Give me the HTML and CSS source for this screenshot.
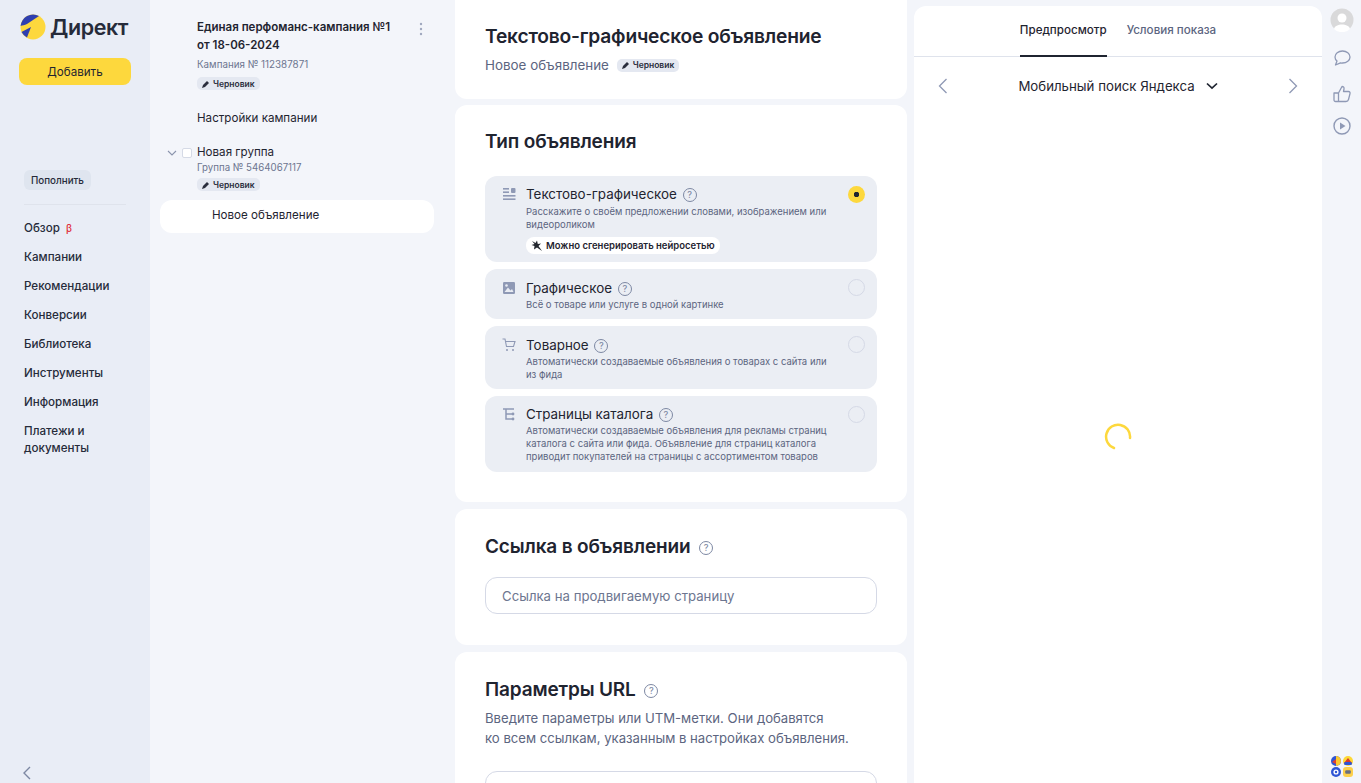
FILE: index.html
```html
<!DOCTYPE html>
<html lang="ru">
<head>
    <meta charset="UTF-8">
    <title>Директ</title>
    <link rel="stylesheet" href="styles.css">
</head>
<body>
    <aside class="sidebar">
        <div class="logo">
            <svg class="logo-mark" width="26" height="26" viewBox="0 0 26 26">
                <circle cx="13" cy="13" r="12.5" fill="#fdd83d"/>
                <path d="M0.6 12 A12.5 12.5 0 0 1 19 2 L7 10 C4.5 11 2.5 11.5 0.6 12 Z" fill="#2f3fb0"/>
                <path d="M1.5 18 L11 13 L7 23.5 A12.5 12.5 0 0 1 1.5 18 Z" fill="#2f3fb0"/>
            </svg>
            <span class="logo-text">Директ</span>
        </div>
        <button class="add-btn">Добавить</button>
        <button class="topup-btn">Пополнить</button>
        <div class="side-line"></div>
        <nav class="side-nav">
            <a>Обзор <span class="beta">β</span></a>
            <a>Кампании</a>
            <a>Рекомендации</a>
            <a>Конверсии</a>
            <a>Библиотека</a>
            <a>Инструменты</a>
            <a>Информация</a>
            <a>Платежи и<br>документы</a>
        </nav>
        <svg class="collapse" width="10" height="14" viewBox="0 0 10 14"><path d="M8 1 L2 7 L8 13" fill="none" stroke="#7d88a3" stroke-width="1.4"/></svg>
    </aside>

    <section class="tree">
        <div class="tree-head">
            <div class="tree-title">Единая перфоманс-кампания №1 от 18-06-2024</div>
            <svg class="dots" width="4" height="14" viewBox="0 0 4 14"><circle cx="2" cy="2" r="1.2" fill="#a0a8bf"/><circle cx="2" cy="7" r="1.2" fill="#a0a8bf"/><circle cx="2" cy="12" r="1.2" fill="#a0a8bf"/></svg>
        </div>
        <div class="tree-sub">Кампания № 112387871</div>
        <span class="draft"><svg width="8" height="8" viewBox="0 0 8 8"><path d="M0 8 L1 5 L5 1 L7 3 L3 7 Z" fill="#2a2e3d"/></svg>Черновик</span>
        <div class="tree-link">Настройки кампании</div>
        <div class="group-row">
            <svg width="10" height="6" viewBox="0 0 10 6"><path d="M1 1 L5 5 L9 1" fill="none" stroke="#8b94ad" stroke-width="1.1"/></svg>
            <span class="check"></span>
            <span>Новая группа</span>
        </div>
        <div class="tree-sub group-sub">Группа № 5464067117</div>
        <span class="draft"><svg width="8" height="8" viewBox="0 0 8 8"><path d="M0 8 L1 5 L5 1 L7 3 L3 7 Z" fill="#2a2e3d"/></svg>Черновик</span>
        <div class="tree-active">Новое объявление</div>
    </section>

    <main class="main">
        <div class="card card-head">
            <h1>Текстово-графическое объявление</h1>
            <div class="head-sub">Новое объявление <span class="draft draft-inline"><svg width="8" height="8" viewBox="0 0 8 8"><path d="M0 8 L1 5 L5 1 L7 3 L3 7 Z" fill="#2a2e3d"/></svg>Черновик</span></div>
        </div>

        <div class="card card-type">
            <h2>Тип объявления</h2>
            <div class="types">
                <div class="type type-first">
                    <svg class="type-icon" width="14" height="14" viewBox="0 0 14 14"><g fill="#8f99b5"><rect x="1" y="1" width="6" height="1.6"/><rect x="1" y="4.4" width="6" height="1.6"/><rect x="9" y="1" width="4.5" height="5" rx="1"/><rect x="1" y="8" width="12.5" height="1.6"/><rect x="1" y="11.4" width="12.5" height="1.6"/></g></svg>
                    <div class="type-body">
                        <div class="type-title">Текстово-графическое <span class="help">?</span></div>
                        <p>Расскажите о своём предложении словами, изображением или видеороликом</p>
                        <span class="neuro"><svg width="12" height="12" viewBox="0 0 12 12"><path d="M1 1 L4.5 3 L6 0.5 L6.8 4 L10 3.5 L7.5 6 L11 11 L6 7.5 L3 9.5 L3.5 6 L0.5 5 L3.5 4 Z" fill="#23272f"/></svg>Можно сгенерировать нейросетью</span>
                    </div>
                    <span class="radio radio-on"></span>
                </div>
                <div class="type type-second">
                    <svg class="type-icon" width="14" height="14" viewBox="0 0 14 14"><rect x="1" y="1" width="12" height="12" rx="1.2" fill="#8f99b5"/><circle cx="4.5" cy="4.5" r="1.3" fill="#e9ecf3"/><path d="M2.5 11 L6 6.5 L8.5 9.5 L10 8 L11.5 11 Z" fill="#e9ecf3"/></svg>
                    <div class="type-body">
                        <div class="type-title">Графическое <span class="help">?</span></div>
                        <p>Всё о товаре или услуге в одной картинке</p>
                    </div>
                    <span class="radio"></span>
                </div>
                <div class="type type-third">
                    <svg class="type-icon" width="14" height="14" viewBox="0 0 14 14"><path d="M0.5 1 H3 L4.5 8.5 H11.5 L13 3.5 H3.6" fill="none" stroke="#8f99b5" stroke-width="1.1"/><circle cx="5" cy="12" r="1" fill="#8f99b5"/><circle cx="11" cy="12" r="1" fill="#8f99b5"/></svg>
                    <div class="type-body">
                        <div class="type-title">Товарное <span class="help">?</span></div>
                        <p>Автоматически создаваемые объявления о товарах с сайта или из фида</p>
                    </div>
                    <span class="radio"></span>
                </div>
                <div class="type type-fourth">
                    <svg class="type-icon" width="14" height="14" viewBox="0 0 14 14"><path d="M1 2 H12 M4 2 V12 H10 M4 7 H10" fill="none" stroke="#8f99b5" stroke-width="1.5"/><circle cx="11" cy="7" r="1.4" fill="#8f99b5"/><circle cx="11" cy="12" r="1.4" fill="#8f99b5"/></svg>
                    <div class="type-body">
                        <div class="type-title">Страницы каталога <span class="help">?</span></div>
                        <p>Автоматически создаваемые объявления для рекламы страниц каталога с сайта или фида. Объявление для страниц каталога приводит покупателей на страницы с ассортиментом товаров</p>
                    </div>
                    <span class="radio"></span>
                </div>
            </div>
        </div>

        <div class="card card-link">
            <h2>Ссылка в объявлении <span class="help help-big">?</span></h2>
            <div class="field">Ссылка на продвигаемую страницу</div>
        </div>

        <div class="card card-params">
            <h2>Параметры URL <span class="help help-big">?</span></h2>
            <p class="params-text">Введите параметры или UTM-метки. Они добавятся<br>ко всем ссылкам, указанным в настройках объявления.</p>
            <div class="field"></div>
        </div>
    </main>

    <section class="preview">
        <div class="tabs">
            <span class="tab tab-on">Предпросмотр</span>
            <span class="tab">Условия показа</span>
        </div>
        <div class="device-row">
            <svg width="10" height="16" viewBox="0 0 10 16"><path d="M8.5 1 L1.5 8 L8.5 15" fill="none" stroke="#8f99b5" stroke-width="1.3"/></svg>
            <div class="device">Мобильный поиск Яндекса
                <svg width="12" height="8" viewBox="0 0 12 8"><path d="M1 1.5 L6 6.2 L11 1.5" fill="none" stroke="#1f2430" stroke-width="1.7"/></svg>
            </div>
            <svg width="10" height="16" viewBox="0 0 10 16"><path d="M1.5 1 L8.5 8 L1.5 15" fill="none" stroke="#8f99b5" stroke-width="1.3"/></svg>
        </div>
        <div class="loader-box">
            <svg width="28" height="28" viewBox="0 0 28 28"><path d="M10 26 A12 12 0 1 1 26 16" fill="none" stroke="#fdd83d" stroke-width="2.5" stroke-linecap="round"/></svg>
        </div>
    </section>

    <aside class="rail">
        <svg class="rail-avatar" width="24" height="24" viewBox="0 0 24 24"><circle cx="12" cy="12" r="11.5" fill="#d9d9da"/><circle cx="12" cy="10" r="4.5" fill="#fff"/><path d="M4 21 C5 15 19 15 20 21 A11.5 11.5 0 0 1 4 21 Z" fill="#fff"/></svg>
        <svg class="rail-chat" width="18" height="18" viewBox="0 0 18 18"><path d="M9.5 2 C5.3 2 2 4.6 2 8 C2 9.6 2.7 11 4 12 L2.5 16 L7.5 13.9 C8.2 14 8.8 14.1 9.5 14 C13.7 14 17 11.4 17 8 C17 4.6 13.7 2 9.5 2 Z" fill="none" stroke="#8f99b5" stroke-width="1.3" stroke-linejoin="round"/></svg>
        <svg class="rail-like" width="18" height="18" viewBox="0 0 18 18"><path d="M5.5 8 L9 1.5 C10.5 1.5 11.3 2.6 11 4 L10.5 6.5 H15.5 C16.7 6.5 17.3 7.6 17 8.6 L15.5 14.5 C15.2 15.7 14.3 16.5 13 16.5 H5.5 Z M1 8 H5.5 V16.5 H2.5 C1.6 16.5 1 15.9 1 15 Z" fill="none" stroke="#8f99b5" stroke-width="1.3" stroke-linejoin="round"/></svg>
        <svg width="18" height="18" viewBox="0 0 18 18"><circle cx="9" cy="9" r="8" fill="none" stroke="#8f99b5" stroke-width="1.4"/><path d="M7 5.5 L12.5 9 L7 12.5 Z" fill="#8f99b5"/></svg>
        <div class="apps">
            <svg width="10" height="10" viewBox="0 0 10 10"><circle cx="5" cy="5" r="5" fill="#2f55d4"/><path d="M5 0 A5 5 0 0 1 5 10 Z" fill="#fdc92f"/><path d="M1 6 L5 3 V8 Z" fill="#e0402f"/></svg>
            <svg width="10" height="10" viewBox="0 0 10 10"><circle cx="5" cy="5" r="5" fill="#fdd835"/><path d="M1 7 L5 2 L9 7 Z" fill="#d8392f"/><rect x="1" y="6" width="8" height="3" rx="1.5" fill="#2f55d4"/></svg>
            <svg width="10" height="10" viewBox="0 0 10 10"><circle cx="5" cy="5" r="5" fill="#2f55d4"/><circle cx="5" cy="5" r="2.6" fill="#fff"/><circle cx="5" cy="5" r="1.2" fill="#2f55d4"/></svg>
            <svg width="10" height="10" viewBox="0 0 10 10"><rect width="10" height="10" rx="3" fill="#fdd04a"/><rect x="2.2" y="3.2" width="5.6" height="3.6" rx="1" fill="#6a6f80"/></svg>
        </div>
    </aside>
</body>
</html>
```

FILE: styles.css
```css
* {
    box-sizing: border-box;
}

html, body {
    height: 783px;
}

body {
    margin: 0;
    display: flex;
    overflow: hidden;
    font-family: Inter, "Noto Sans", sans-serif;
    color: #1f2430;
    background-color: #f3f5fa;
}

p, h1, h2 {
    margin: 0;
}

/* left menu */
.sidebar {
    position: relative;
    flex: 0 0 150px;
    padding: 14px 0 0 24px;
    background-color: #e9edf6;
}

.logo {
    display: flex;
    align-items: center;
    gap: 4px;
    margin-left: -4px;
    height: 26px;
}

.logo-text {
    font-size: 21.5px;
    font-weight: 600;
    letter-spacing: -0.4px;
    color: #262b3a;
}

.add-btn {
    display: block;
    width: 112px;
    height: 27px;
    margin: 18px 0 0 -5px;
    border: 0;
    border-radius: 8px;
    background-color: #fdd83d;
    font-family: inherit;
    font-size: 11.6px;
    color: #1f2430;
}

.topup-btn {
    display: block;
    width: 67px;
    height: 20px;
    margin-top: 85px;
    padding: 0;
    border: 0;
    border-radius: 6px;
    background-color: #dfe5ef;
    font-family: inherit;
    font-size: 9.8px;
    font-weight: 500;
    color: #262b3a;
}

.side-line {
    width: 102px;
    height: 1px;
    margin: 14px 0 15px;
    background-color: #dfe3ec;
}

.side-nav a {
    display: block;
    margin-bottom: 12px;
    font-size: 11.6px;
    font-weight: 500;
    line-height: 17px;
    color: #262b3a;
}

.beta {
    margin-left: 3px;
    font-size: 10px;
    color: #e0303a;
}

.collapse {
    position: absolute;
    left: 22px;
    bottom: 3px;
}

/* campaign tree */
.tree {
    flex: 0 0 305px;
    padding: 18px 0 0 47px;
}

.tree-head {
    display: flex;
    justify-content: space-between;
    padding-right: 32px;
}

.tree-title {
    width: 205px;
    font-size: 11.5px;
    font-weight: 600;
    line-height: 18px;
}

.dots {
    margin-top: 4px;
}

.tree-sub {
    margin-top: 4px;
    font-size: 9.8px;
    line-height: 14px;
    color: #6d7690;
}

.group-sub {
    margin-top: 0;
    font-size: 9.7px;
}

.draft {
    display: flex;
    align-items: center;
    gap: 3px;
    width: fit-content;
    height: 13px;
    margin-top: 5px;
    padding: 0 5px;
    border-radius: 5px;
    background-color: #e4e8f1;
    font-size: 8.5px;
    font-weight: 600;
    color: #2a2e3d;
}

.group-sub + .draft {
    margin-top: 3px;
}

.draft-inline {
    display: inline-flex;
    margin: 0 0 0 4px;
    vertical-align: 1px;
}

.tree-link {
    margin-top: 20px;
    font-size: 11.6px;
    line-height: 17px;
}

.group-row {
    display: flex;
    align-items: center;
    margin: 17px 0 0 -30px;
    font-size: 11.6px;
    line-height: 17px;
}

.check {
    width: 10px;
    height: 10px;
    margin: 0 5px 0 5px;
    border: 1px solid #d5dae6;
    border-radius: 2px;
    background-color: #fff;
}

.tree-active {
    width: 274px;
    height: 33px;
    margin: 9px 0 0 -37px;
    padding-left: 52px;
    border-radius: 12px;
    background-color: #fff;
    font-size: 11.6px;
    line-height: 30px;
}

/* cards */
.main {
    flex: 0 0 452px;
    display: flex;
    flex-direction: column;
    gap: 7px;
    overflow: hidden;
}

.card {
    flex: none;
    padding: 0 30px;
    border-radius: 12px;
    background-color: #fff;
}

.card-head {
    height: 99px;
    margin-bottom: -1px;
    padding-top: 24px;
    border-radius: 0 0 12px 12px;
}

h1 {
    font-size: 19.2px;
    font-weight: 600;
    line-height: 25px;
    letter-spacing: -0.2px;
}

.head-sub {
    margin-top: 7px;
    font-size: 13.4px;
    line-height: 18px;
    color: #5c6580;
}

h2 {
    font-size: 19px;
    font-weight: 600;
    line-height: 25px;
    letter-spacing: -0.15px;
}

.card-type {
    height: 397px;
    padding-top: 24px;
}

.types {
    display: flex;
    flex-direction: column;
    gap: 7px;
    margin-top: 22px;
}

.type {
    display: flex;
    padding: 9px 12px 0 17px;
    border-radius: 12px;
    background-color: #ebeef4;
}

.type-first {
    height: 86px;
}

.type-first p {
    margin-top: 2px;
}

.type-first .radio,
.type-fourth .radio {
    margin-top: 1px;
}

.type-second {
    height: 50px;
    padding-top: 10px;
}

.type-third {
    height: 63px;
    padding-top: 10px;
}

.type-fourth {
    height: 76px;
}

.type-icon {
    flex: none;
    margin-top: 2px;
}

.type-body {
    flex: 1;
    min-width: 0;
    margin-left: 10px;
}

.type-title {
    font-size: 13.4px;
    line-height: 18px;
}

.type-body p {
    width: 310px;
    font-size: 9.5px;
    line-height: 13px;
    color: #5c6580;
}

.type-second p,
.type-third p,
.type-fourth p {
    margin-top: 1px;
}

.neuro {
    display: inline-flex;
    align-items: center;
    gap: 3px;
    height: 17px;
    margin-top: 6px;
    padding: 0 5px;
    border-radius: 8px;
    background-color: #fff;
    font-size: 9.5px;
    font-weight: 600;
}

.radio {
    flex: none;
    width: 17px;
    height: 17px;
    border: 1px solid #d5d9e6;
    border-radius: 50%;
}

.radio-on {
    border: 0;
    background: radial-gradient(circle, #1f2430 2.5px, #fdd83d 3px);
}

.help {
    display: inline-block;
    width: 14px;
    height: 14px;
    margin-left: 2px;
    border: 1.3px solid #7d88a3;
    border-radius: 50%;
    font-size: 9px;
    font-weight: 500;
    line-height: 11.5px;
    letter-spacing: 0;
    text-align: center;
    vertical-align: 1px;
    color: #7d88a3;
}

.help-big {
    margin-left: 4px;
    vertical-align: 2px;
}

.card-link {
    height: 136px;
    padding-top: 24px;
}

.card-link h2,
.card-params h2 {
    line-height: 27px;
}

.field {
    height: 37px;
    margin-top: 17px;
    padding-left: 16px;
    border: 1px solid #d5d9e6;
    border-radius: 12px;
    font-size: 13.2px;
    line-height: 36px;
    color: #6d7690;
}

.card-params {
    height: 200px;
    padding-top: 24px;
}

.params-text {
    margin-top: 5px;
    font-size: 13.15px;
    line-height: 20px;
    color: #5c6580;
}

.card-params .field {
    margin-top: 23px;
}

/* preview */
.preview {
    flex: 0 0 408px;
    display: flex;
    flex-direction: column;
    margin: 6px 0 0 7px;
    border-radius: 12px 12px 0 0;
    background-color: #fff;
}

.tabs {
    display: flex;
    justify-content: center;
    gap: 20px;
    height: 51px;
    border-bottom: 1px solid #dfe3ec;
}

.tab {
    height: 51px;
    font-size: 11.6px;
    font-weight: 500;
    line-height: 49px;
    color: #5c6580;
}

.tab-on {
    border-bottom: 2px solid #1f2430;
    color: #1f2430;
}

.device-row {
    display: flex;
    align-items: center;
    justify-content: space-between;
    height: 57px;
    padding: 0 24px;
}

.device {
    display: flex;
    align-items: center;
    gap: 11px;
    font-size: 13.25px;
}

.loader-box {
    flex: 1;
    display: flex;
    justify-content: center;
    padding-top: 308px;
}

/* right rail */
.rail {
    flex: 1;
    display: flex;
    flex-direction: column;
    align-items: center;
    gap: 14px;
    padding-top: 8px;
}

.rail-chat {
    margin-top: 3px;
}

.rail-like {
    margin-top: 4px;
}

.apps {
    display: grid;
    grid-template-columns: 10px 10px;
    gap: 1px 2px;
    margin-top: auto;
    margin-bottom: 6px;
}
```
